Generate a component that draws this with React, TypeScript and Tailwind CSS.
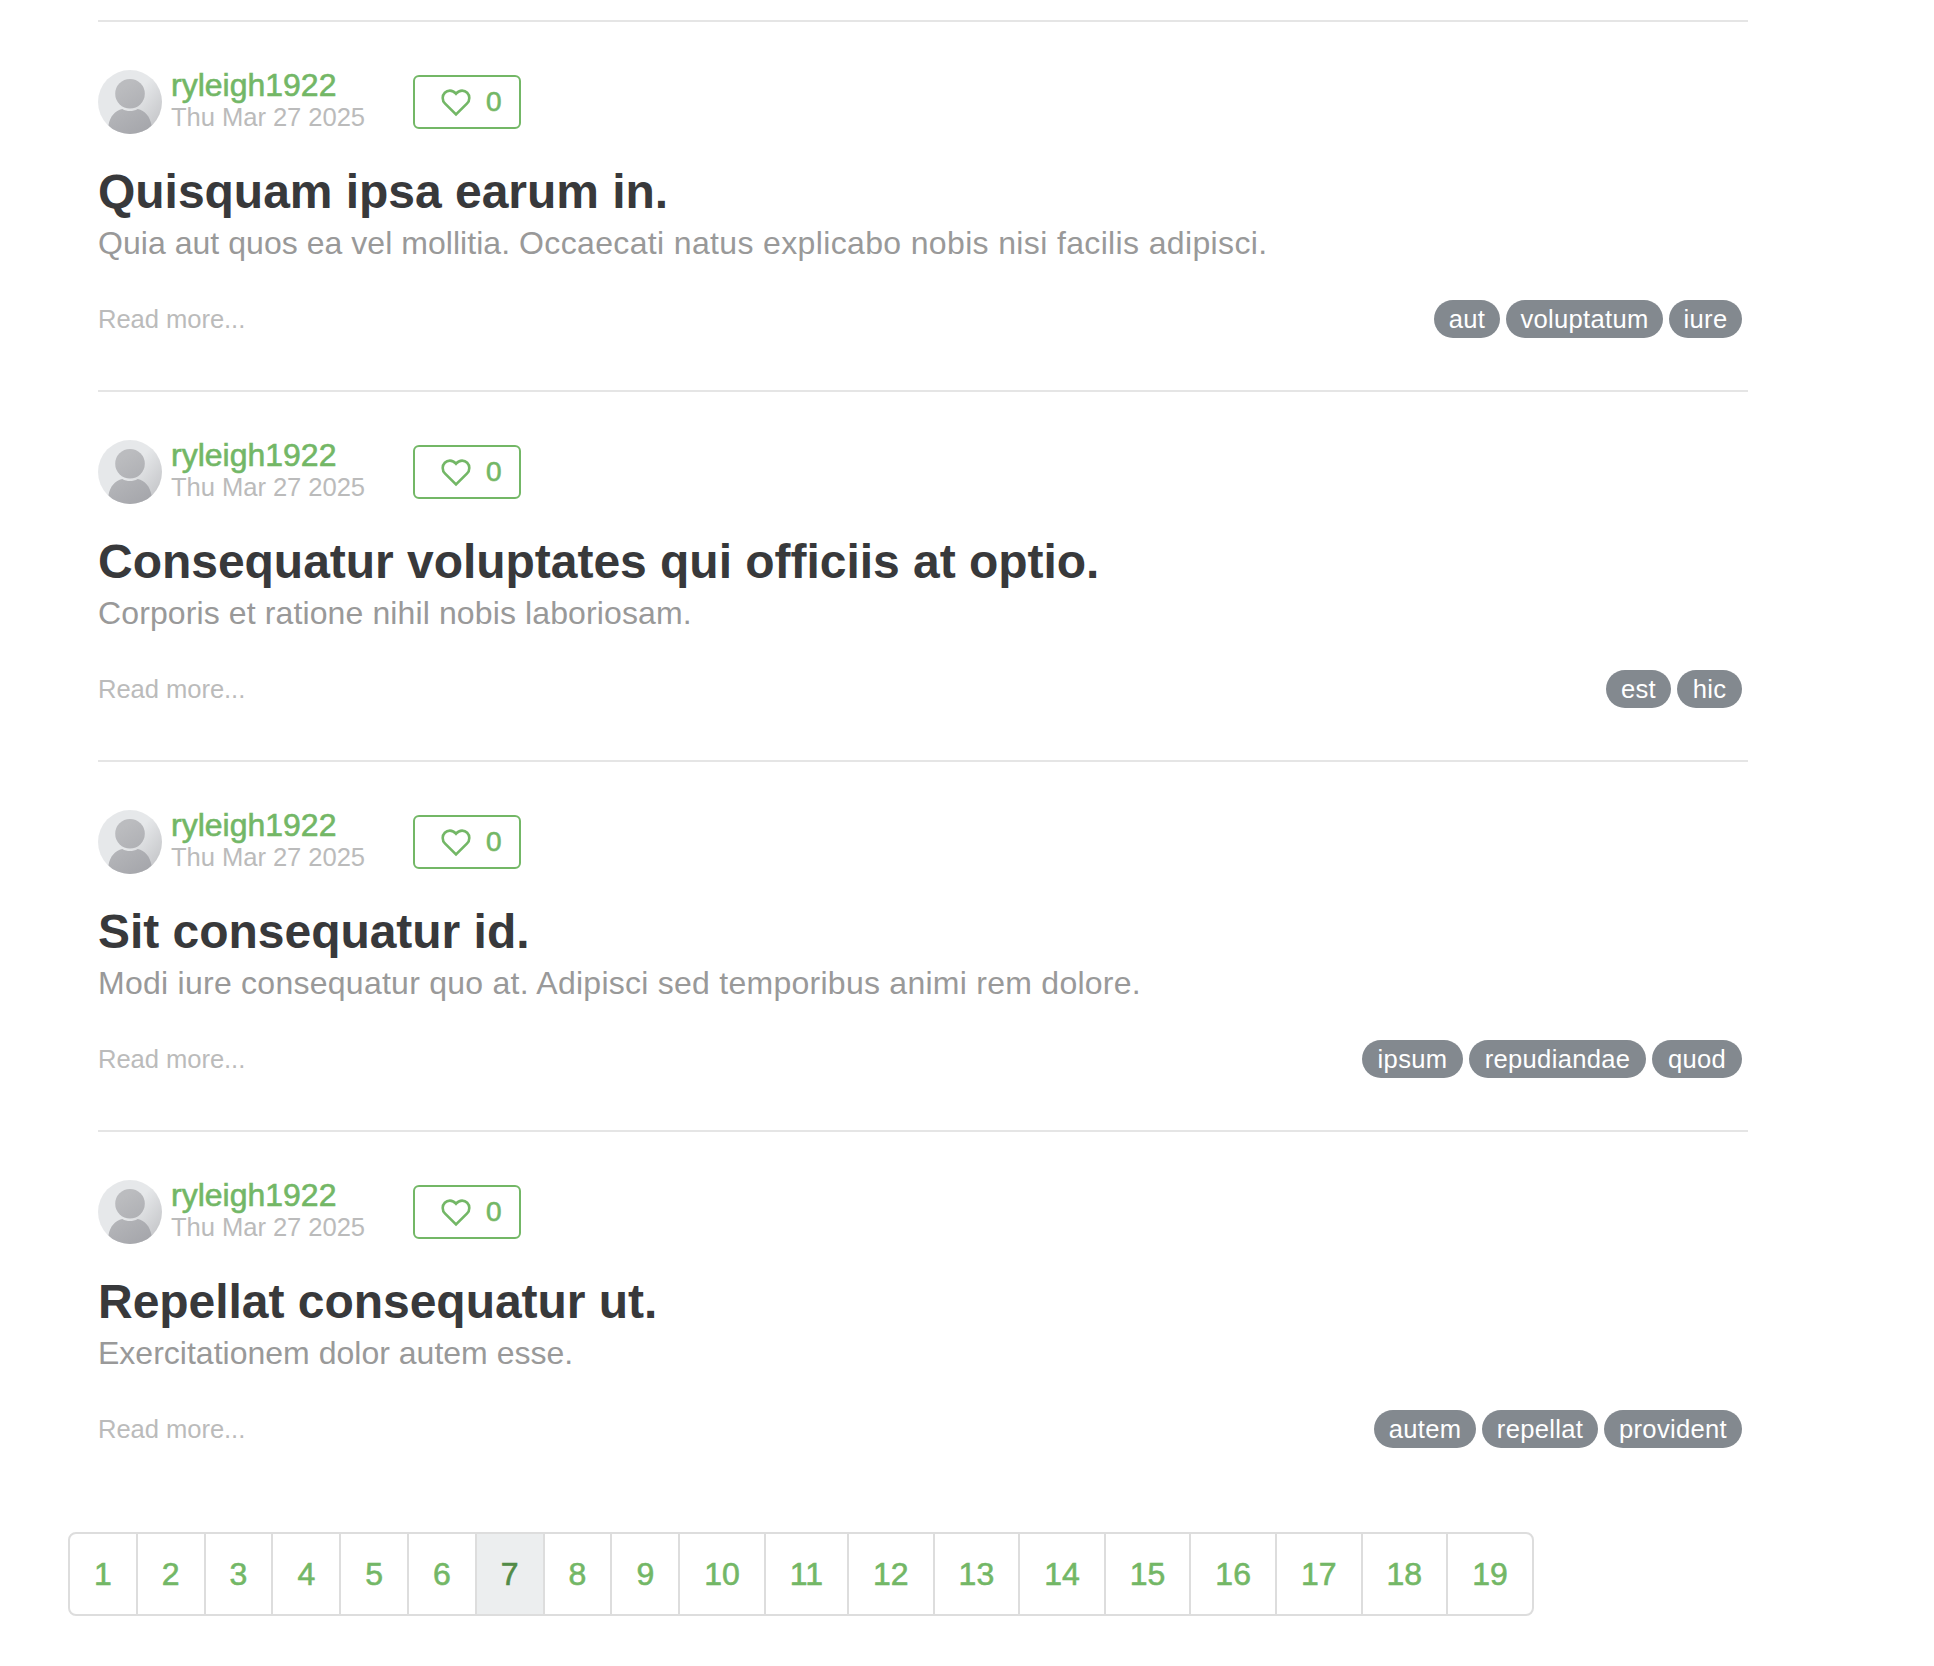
import React from "react";

const articles = [
  {
    title: "Quisquam ipsa earum in.",
    description: [
      { text: "Quia aut quos ea vel mollitia. ", tracking: "tracking-[0.04px]" },
      { text: "Occaecati natus explicabo nobis nisi facilis adipisci.", tracking: "tracking-[0.355px]" },
    ],
    tags: [
      { name: "aut", width: 66 },
      { name: "voluptatum", width: 157 },
      { name: "iure", width: 73 },
    ],
  },
  {
    title: "Consequatur voluptates qui officiis at optio.",
    description: [{ text: "Corporis et ratione nihil nobis laboriosam.", tracking: "tracking-[0.115px]" }],
    tags: [
      { name: "est", width: 65 },
      { name: "hic", width: 65 },
    ],
  },
  {
    title: "Sit consequatur id.",
    description: [
      { text: "Modi iure consequatur quo at. Adipisci sed temporibus animi rem dolore.", tracking: "tracking-[0.26px]" },
    ],
    tags: [
      { name: "ipsum", width: 101 },
      { name: "repudiandae", width: 177 },
      { name: "quod", width: 90 },
    ],
  },
  {
    title: "Repellat consequatur ut.",
    description: [{ text: "Exercitationem dolor autem esse.", tracking: "tracking-[0.01px]" }],
    tags: [
      { name: "autem", width: 102 },
      { name: "repellat", width: 116 },
      { name: "provident", width: 138 },
    ],
  },
];

const pages = Array.from({ length: 19 }, (_, i) => i + 1);
const currentPage = 7;

const Avatar: React.FC = () => (
  <svg width="64" height="64" viewBox="0 0 64 64" className="block rounded-full">
    <defs>
      <linearGradient id="bg" x1="0" y1="0.1" x2="1" y2="0.9">
        <stop offset="0.5" stopColor="#e6e8ea" />
        <stop offset="0.9" stopColor="#c8c9cc" />
      </linearGradient>
      <linearGradient id="fg" gradientUnits="userSpaceOnUse" x1="14" y1="8" x2="50" y2="64">
        <stop offset="0.2" stopColor="#bbbcbf" />
        <stop offset="1" stopColor="#a4a5aa" />
      </linearGradient>
    </defs>
    <rect width="64" height="64" fill="url(#bg)" />
    <circle cx="32" cy="23.8" r="14.8" fill="url(#fg)" />
    <path
      d="M10.500 55C12 46.500 17 40.500 24.300 39C29 41.700 35 41.700 39.700 39C47 40.500 52 46.500 53.500 55V64H10.500Z"
      fill="url(#fg)"
    />
  </svg>
);

const ArticlePreview: React.FC<{ article: (typeof articles)[0] }> = ({ article }) => {
  return (
    <div className="h-[370px] border-t-2 border-[#e5e5e5] pt-12">
      <div className="flex h-16 items-center">
        <Avatar />
        <div className="-mt-[2px] ml-[9px] w-[242px]">
          <a className="block text-[32px] leading-[32px] text-[#73b766] [-webkit-text-stroke:0.6px_#73b766]">ryleigh1922</a>
          <span className="block text-[25.6px] leading-[32px] tracking-[-0.06px] text-[#bbb]">Thu Mar 27 2025</span>
        </div>
        <button className="flex h-[54px] w-[108px] items-center rounded-[6px] border-2 border-[#73b766] pl-[26px] text-[28px] text-[#73b766]">
          <svg width="30" height="28" viewBox="0 0 30 28" fill="none" stroke="currentColor" strokeWidth="2.6" className="mt-[2px]">
            <path d="M15 4.800C13.300 2.700 11.300 1.600 8.900 1.600C4.900 1.600 1.700 4.800 1.700 8.900C1.700 11.400 2.600 13.200 4.100 14.700L15 25.500L25.900 14.700C27.400 13.200 28.300 11.400 28.300 8.900C28.300 4.800 25.100 1.600 21.100 1.600C18.700 1.600 16.700 2.700 15 4.800Z" />
          </svg>
          <span className="ml-[15px] [-webkit-text-stroke:0.6px_#73b766]">0</span>
        </button>
      </div>
      <h1 className="mt-[31px] text-[48px] leading-[53px] font-bold tracking-[-0.03px] text-[#38393b]">{article.title}</h1>
      <p className="mt-px text-[32px] leading-[48px] text-[#999]">
        {article.description.map((sentence) => (
          <span key={sentence.text} className={sentence.tracking}>{sentence.text}</span>
        ))}
      </p>
      <div className="mt-[33px] flex items-center justify-between pr-[6px]">
        <span className="pt-px text-[25.6px] leading-[37px] tracking-[-0.06px] text-[#bbb]">Read more...</span>
        <ul className="flex gap-[6px]">
          {article.tags.map((tag) => (
            <li
              key={tag.name}
              style={{ width: tag.width }}
              className="h-[38px] rounded-full bg-[#83898f] text-center text-[25.6px] leading-[38px] tracking-[0.3px] text-white"
            >
              {tag.name}
            </li>
          ))}
        </ul>
      </div>
    </div>
  );
};

export default function App() {
  return (
    <div className="h-[1666px] w-[1934px] overflow-hidden bg-white pt-5 font-['Liberation_Sans',Arial,sans-serif]">
      <div className="ml-[98px] w-[1650px]">
        {articles.map((article) => (
          <ArticlePreview key={article.title} article={article} />
        ))}
      </div>
      <nav className="mt-8 ml-[68px] flex">
        {pages.map((page) => (
          <a
            key={page}
            className={`-ml-[2px] h-[84px] border-2 border-[#ddd] px-6 text-[32px] leading-[80px] first:ml-0 first:rounded-l-[8px] last:rounded-r-[8px] ${
              page === currentPage
                ? "bg-[#eceeef] text-[#528b47] [-webkit-text-stroke:0.6px_#528b47]"
                : "text-[#73b766] [-webkit-text-stroke:0.6px_#73b766]"
            }`}
          >
            {page}
          </a>
        ))}
      </nav>
    </div>
  );
}
